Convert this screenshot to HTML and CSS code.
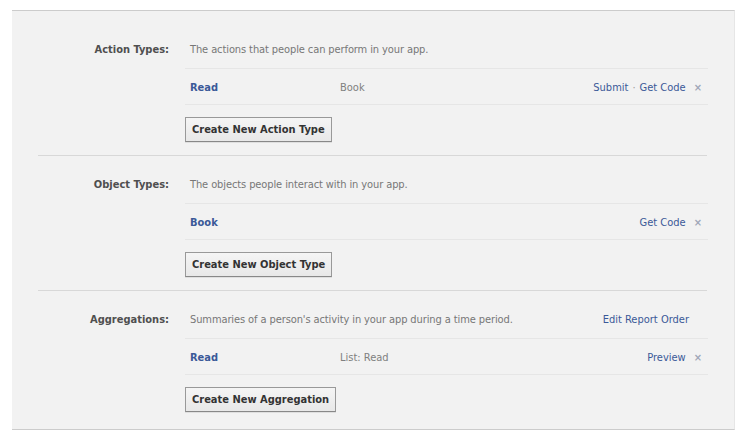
FILE: index.html
```html
<!DOCTYPE html>
<html>
<head>
<meta charset="utf-8">
<link rel="stylesheet" href="styles.css">
</head>
<body>
<div class="panel">
  <div class="section first">
    <div class="label">Action Types:</div>
    <div class="content">
      <div class="desc"><span class="desc-text">The actions that people can perform in your app.</span></div>
      <div class="row">
        <a class="name">Read</a>
        <span class="meta">Book</span>
        <span class="actions"><a>Submit</a><span class="dot">·</span><a>Get Code</a></span>
        <span class="x">×</span>
      </div>
      <button class="btn">Create New Action Type</button>
    </div>
  </div>
  <div class="section">
    <div class="label">Object Types:</div>
    <div class="content">
      <div class="desc"><span class="desc-text">The objects people interact with in your app.</span></div>
      <div class="row">
        <a class="name">Book</a>
        <span class="meta"></span>
        <span class="actions"><a>Get Code</a></span>
        <span class="x">×</span>
      </div>
      <button class="btn">Create New Object Type</button>
    </div>
  </div>
  <div class="section">
    <div class="label">Aggregations:</div>
    <div class="content">
      <div class="desc"><span class="desc-text">Summaries of a person's activity in your app during a time period.</span><a class="desc-link">Edit Report Order</a></div>
      <div class="row">
        <a class="name">Read</a>
        <span class="meta">List: Read</span>
        <span class="actions"><a>Preview</a></span>
        <span class="x">×</span>
      </div>
      <button class="btn">Create New Aggregation</button>
    </div>
  </div>
</div>
</body>
</html>
```
FILE: styles.css
```css
html, body {
  margin: 0;
  padding: 0;
  background: #ffffff;
}
body {
  font-family: "DejaVu Sans Condensed", "DejaVu Sans", sans-serif;
  font-stretch: semi-condensed;
  font-size: 11px;
  color: #333333;
}
.panel {
  margin: 10px 13px 0 12px;
  background: #f2f2f2;
  border-top: 1px solid #cccccc;
  border-bottom: 1px solid #cccccc;
  border-right: 1px solid #e6e6e6;
  padding: 10px 0 3px 0;
  height: 420px;
  box-sizing: border-box;
}
.section {
  display: grid;
  grid-template-columns: 131px 523px;
  column-gap: 16px;
  margin: 0 27px 0 26px;
  padding-top: 21px;
  border-top: 1px solid #d8d8d8;
}
.section.first {
  border-top: none;
}
.label {
  text-align: right;
  font-weight: bold;
  color: #4f4f4f;
  line-height: 14px;
  padding-top: 1px;
}
.content {
  display: flex;
  flex-direction: column;
  align-items: flex-start;
}
.desc {
  align-self: stretch;
  display: flex;
  justify-content: space-between;
  padding: 1px 19px 11px 5px;
  line-height: 14px;
  border-bottom: 1px solid #e6e6e6;
  color: #777777;
  letter-spacing: -0.1px;
}
.desc-link {
  color: #3b5998;
  letter-spacing: 0;
}
.row {
  align-self: stretch;
  display: flex;
  align-items: center;
  padding: 12px 6px 9px 5px;
  line-height: 14px;
  border-bottom: 1px solid #e6e6e6;
}
.name {
  width: 150px;
  font-weight: bold;
  color: #3b5998;
}
.meta {
  flex: 1;
  color: #808080;
}
.actions {
  color: #3b5998;
}
.dot {
  color: #999999;
  margin: 0 4px;
}
.x {
  margin-left: 8px;
  color: #a0a7b8;
  font-weight: bold;
  font-size: 11px;
}
.btn {
  margin: 12px 0 13px 0;
  height: 25px;
  padding: 0 6px;
  font-family: inherit;
  font-stretch: inherit;
  font-size: 11px;
  font-weight: bold;
  color: #333333;
  background: linear-gradient(#f5f5f5, #e8e8e8);
  border: 1px solid #999999;
  border-bottom-color: #888888;
  box-shadow: 0 1px 0 rgba(0,0,0,0.08);
}
```
